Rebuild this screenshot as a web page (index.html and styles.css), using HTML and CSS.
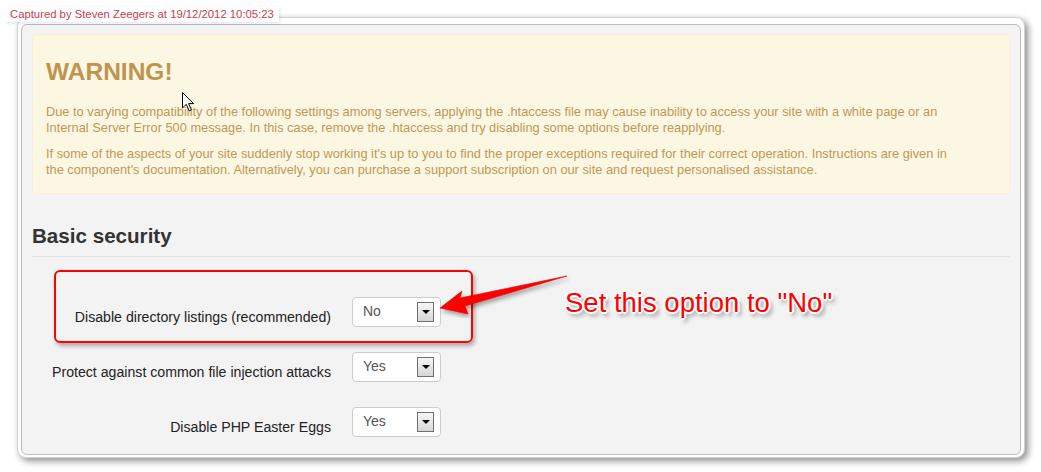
FILE: index.html
```
<!DOCTYPE html>
<html>
<head>
<meta charset="utf-8">
<link rel="stylesheet" href="styles.css">
</head>
<body>
<div class="caption">Captured by Steven Zeegers at 19/12/2012 10:05:23</div>
<div class="window">
  <div class="panel">
    <div class="warning">
      <h4 class="warning-title">WARNING!</h4>
      <p class="warning-text">Due to varying compatibility of the following settings among servers, applying the .htaccess file may cause inability to access your site with a white page or an<br>Internal Server Error 500 message. In this case, remove the .htaccess and try disabling some options before reapplying.</p>
      <p class="warning-text">If some of the aspects of your site suddenly stop working it's up to you to find the proper exceptions required for their correct operation. Instructions are given in<br>the component's documentation. Alternatively, you can purchase a support subscription on our site and request personalised assistance.</p>
    </div>
    <h3 class="section-title">Basic security</h3>
    <div class="form">
      <div class="row">
        <label class="label">Disable directory listings (recommended)</label>
        <div class="select"><span class="value">No</span><span class="btn"><span class="tri"></span></span></div>
      </div>
      <div class="row">
        <label class="label">Protect against common file injection attacks</label>
        <div class="select"><span class="value">Yes</span><span class="btn"><span class="tri"></span></span></div>
      </div>
      <div class="row">
        <label class="label">Disable PHP Easter Eggs</label>
        <div class="select"><span class="value">Yes</span><span class="btn"><span class="tri"></span></span></div>
      </div>
    </div>
  </div>
</div>

<div class="annot-box"></div>
<svg class="annot-arrow" width="140" height="50" viewBox="430 268 140 50">
  <defs>
    <filter id="sh" x="-20%" y="-50%" width="140%" height="200%">
      <feDropShadow dx="2" dy="3" stdDeviation="2" flood-color="#000" flood-opacity="0.35"/>
    </filter>
  </defs>
  <polygon points="440,308 462,291 460,298 567,276 465,306 468,314" fill="#ff0000" stroke="#e00000" stroke-width="0.6" stroke-linejoin="round" filter="url(#sh)"/>
</svg>
<div class="annot-text">Set this option to "No"</div>
<svg class="cursor" width="13" height="20" viewBox="0 0 13 20">
  <path d="M0.5,0.5 L0.5,16 L4.3,12.3 L7.2,18.8 L9.4,17.8 L6.6,11.6 L11.5,11.6 Z" fill="#fff" stroke="#000" stroke-width="1" stroke-linejoin="miter"/>
</svg>
</body>
</html>
```
FILE: styles.css
```
html, body {
  margin: 0;
  padding: 0;
}
body {
  position: relative;
  width: 1041px;
  height: 472px;
  background: #ffffff;
  font-family: "Liberation Sans", Arial, sans-serif;
  overflow: hidden;
}
.caption {
  position: absolute;
  left: 5px;
  top: 7px;
  padding: 1px 5px 1px 5px;
  background: #ffffff;
  color: #c8404c;
  font-size: 11.3px;
  line-height: 13px;
  box-shadow: 1px 1px 3px rgba(0,0,0,0.12);
  z-index: 5;
}
.window {
  box-sizing: border-box;
  margin: 17px 0 0 17px;
  width: 1008px;
  height: 441px;
  background: #ffffff;
  border: 1px solid #d2d2d2;
  border-radius: 9px;
  padding: 6px 3px 2px 3px;
  box-shadow: 3px 3px 7px rgba(0,0,0,0.45);
  display: flex;
  flex-direction: column;
}
.panel {
  flex: 1;
  background: #f3f3f3;
  border: 1px solid #bcbcbc;
  border-radius: 6px;
  padding: 9px 10px 0 10px;
}
.warning {
  background: #fcf7e3;
  border: 1px solid #f9efd6;
  border-radius: 4px;
  padding: 23px 14px 15px 13px;
  color: #c09853;
}
.warning-title {
  margin: 0 0 18px 0;
  font-size: 24.5px;
  line-height: 28px;
  font-weight: bold;
  color: #c0944f;
}
.warning-text {
  margin: 0 0 10px 0;
  font-size: 12.8px;
  line-height: 16px;
}
.warning-text:last-child {
  margin-bottom: 0;
}
.section-title {
  margin: 30px 0 0 0;
  padding: 0 0 8px 0;
  font-size: 20.6px;
  line-height: 24px;
  font-weight: bold;
  color: #333333;
  border-bottom: 1px solid #e2e2e2;
}
.form {
  margin-top: 40px;
  display: flex;
  flex-direction: column;
  gap: 25px;
}
.row {
  display: flex;
  align-items: flex-start;
}
.label {
  width: 299px;
  text-align: right;
  font-size: 14.15px;
  line-height: 20px;
  padding-top: 10px;
  color: #222222;
}
.select {
  box-sizing: border-box;
  margin-left: 21px;
  width: 89px;
  height: 30px;
  background: #ffffff;
  border: 1px solid #cccccc;
  border-radius: 4px;
  display: flex;
  align-items: flex-start;
  padding: 0 0 0 10px;
}
.value {
  flex: 1;
  font-size: 14px;
  line-height: 28px;
  color: #555555;
  margin-top: -1px;
}
.btn {
  box-sizing: border-box;
  width: 17px;
  height: 20px;
  margin: 4px 6px 0 0;
  border: 1px solid #6f6f6f;
  background: linear-gradient(#f6f6f6, #d6d6d6);
  display: flex;
  align-items: center;
  justify-content: center;
}
.tri {
  width: 0;
  height: 0;
  border-left: 4px solid transparent;
  border-right: 4px solid transparent;
  border-top: 4px solid #000000;
}
.annot-box {
  position: absolute;
  left: 54px;
  top: 270px;
  width: 415px;
  height: 69px;
  border: 2px solid #ff0000;
  border-radius: 6px;
  box-shadow: 2px 3px 4px rgba(0,0,0,0.3);
}
.annot-arrow {
  position: absolute;
  left: 430px;
  top: 268px;
}
.annot-text {
  position: absolute;
  left: 565px;
  top: 287px;
  font-size: 27.5px;
  line-height: 32px;
  color: #ff0000;
  white-space: nowrap;
  text-shadow:
    -1px -1px 0 #fff, 1px -1px 0 #fff, -1px 1px 0 #fff, 1px 1px 0 #fff,
    0 -2px 0 #fff, 0 2px 0 #fff, -2px 0 0 #fff, 2px 0 0 #fff,
    3px 4px 4px rgba(0,0,0,0.45);
}
.cursor {
  position: absolute;
  left: 182px;
  top: 92px;
}
```
